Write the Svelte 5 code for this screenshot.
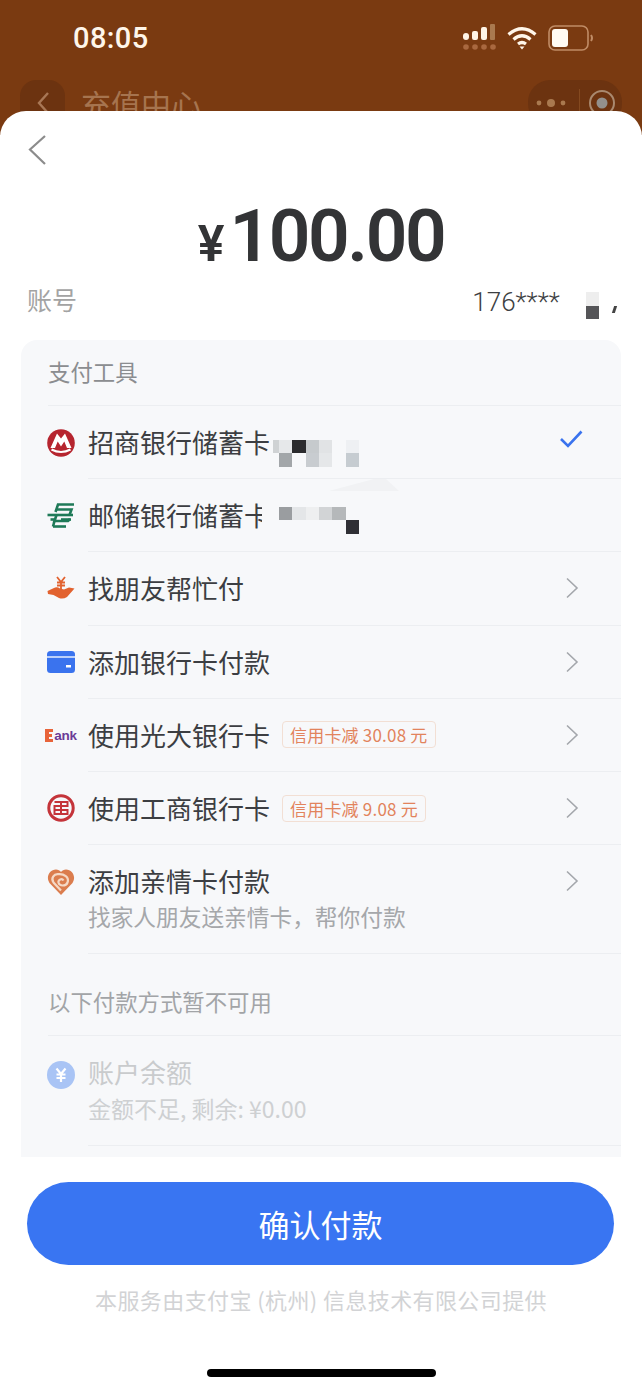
<script>
	const payRows = [
		{ id: 'cmb', name: '招商银行储蓄卡', check: true },
		{ id: 'psbc', name: '邮储银行储蓄卡', smudge: true },
		{ id: 'friend', name: '找朋友帮忙付', arrow: true },
		{ id: 'card', name: '添加银行卡付款', arrow: true },
		{ id: 'ceb', name: '使用光大银行卡', arrow: true, tag: '信用卡减 30.08 元' },
		{ id: 'icbc', name: '使用工商银行卡', arrow: true, tag: '信用卡减 9.08 元' },
		{ id: 'heart', name: '添加亲情卡付款', arrow: true, sub: '找家人朋友送亲情卡，帮你付款' }
	];

	// blurred out card numbers, two lines of cells
	const mosaicA = ['#e6e8ea', '#2b2b2e', '#c6cacd', '#e1e3e5', '', '#eef0f3', '#a2a6a9', '', '#c8ccd0', '#e5e7e9', '', '#c6ccd1'];
	const mosaicB = ['#9a9da0', '#e4e6e8', '#eeeff0', '#d2d4d6', '#b5b8ba', '', '', '', '', '', '', '#2f2f35'];
	const mosaicC = ['#eeeeee', '#555558'];
</script>

{#snippet mosaic(cells, cols)}
	<div class="mosaic" style="grid-template-columns: repeat({cols}, 13.3px)">
		{#each cells as c}
			<span style="background: {c || 'transparent'}"></span>
		{/each}
	</div>
{/snippet}

{#snippet chevron()}
	<svg width="14" height="22" viewBox="0 0 14 22" fill="none">
		<path d="M2 1.5 L12 11 L2 20.5" stroke="#a4a7ac" stroke-width="1.6" />
	</svg>
{/snippet}

{#snippet icon(id)}
	{#if id === 'cmb'}
		<svg width="28" height="28" viewBox="0 0 28 28">
			<circle cx="14" cy="14" r="13.8" fill="#b6252f" />
			<path d="M3.5 19 L10 4.5 L14 9.5 L18 4.5 L24.5 19 L20 19 L17.3 12.5 L14 17.5 L10.7 12.5 L8 19 Z" fill="#fff" />
			<path d="M4.5 20.5 Q14 25.5 23.5 20.5" stroke="#fff" stroke-width="2.2" fill="none" />
		</svg>
	{:else if id === 'psbc'}
		<svg width="28" height="28" viewBox="0 0 28 28" fill="none" stroke="#1f7a58" stroke-width="2.6">
			<path d="M8.5 10 L11 2.5 H27" />
			<path d="M9 7.5 H24.5 L22.5 13" />
			<path d="M0.5 13 H26" />
			<path d="M9.5 13 L7.5 19 H21 L23 17" />
			<path d="M3.5 17.5 H8.5" />
			<path d="M14 17.5 H24" />
			<path d="M6 24.5 L7.5 19" />
			<path d="M6 24.5 H19" />
		</svg>
	{:else if id === 'friend'}
		<svg width="28" height="26" viewBox="0 0 28 26">
			<path d="M0.5 15 L7 12 Q10 10.5 13 12.5 L17 13.5 L22 11.5 L27.5 12.5 L20 21 Q16 23.5 12 22 L6.5 19 L1 18 Z" fill="#e2622f" />
			<path d="M10 1 L14 6 L18 1 M14 6 V13 M10 6.5 H18 M10 9.5 H18" stroke="#e2622f" stroke-width="1.8" fill="none" />
		</svg>
	{:else if id === 'card'}
		<svg width="28" height="22" viewBox="0 0 28 22">
			<rect width="28" height="22" rx="3.5" fill="#3a73ee" />
			<rect y="5" width="28" height="2" fill="#bcd0fa" />
			<rect x="19" y="14" width="5" height="2.5" fill="#fff" />
		</svg>
	{:else if id === 'ceb'}
		<div class="bank">
			<svg width="8" height="13" viewBox="0 0 8 13"><path d="M0 0 H8 V3 H4 V5 H7 V8 H4 V10 H8 V13 H0 Z" fill="#e8643a" /></svg>
			<span>ank</span>
		</div>
	{:else if id === 'icbc'}
		<svg width="28" height="28" viewBox="0 0 28 28" fill="none" stroke="#c4343a">
			<circle cx="14" cy="14" r="12.2" stroke-width="3" />
			<path d="M7.5 8 H20.5 V12 H7.5 V16 M7.5 16 H20.5 V20 H7.5 V16 M14 8 V20" stroke-width="2" />
		</svg>
	{:else if id === 'heart'}
		<svg width="28" height="28" viewBox="0 0 28 28" fill="none">
			<path d="M14 27 L2.5 15 C-1.5 9 2.5 1.5 9 1.5 C11 1.5 13 2.5 14 4 C15 2.5 17 1.5 19 1.5 C25.5 1.5 29.5 9 25.5 15 Z" fill="#db7d4e" />
			<path d="M14 22.5 L6.5 14.5 C3.5 10 7 6 11 6.2 C17 5.5 22.5 9 20.5 14.5 C19 18.5 12.5 18.5 11.5 14.5 C11 11.5 15 10 16.5 12.5" stroke="#f5d9c6" stroke-width="2.2" />
		</svg>
	{/if}
{/snippet}

<div class="page">
	<header class="top">
		<div class="status">
			<span class="time">08:05</span>
			<div class="status-icons">
				<svg width="33" height="28" viewBox="0 0 33 28">
					<rect x="0" y="9" width="6" height="7" rx="3" fill="#fff4e6" />
					<rect x="9" y="7" width="6" height="9" rx="2" fill="#fff4e6" />
					<rect x="18" y="3" width="6" height="13" rx="2" fill="#fff4e6" />
					<rect x="27" y="0" width="5" height="16" rx="1" fill="#a9794f" />
					<g fill="#a9683f">
						<circle cx="3" cy="23" r="2.8" /><circle cx="12" cy="23" r="2.8" /><circle cx="21" cy="23" r="2.8" /><circle cx="30" cy="23" r="2.8" />
					</g>
				</svg>
				<svg width="30" height="24" viewBox="0 0 30 24" fill="none" stroke="#fff6ea" stroke-width="3.2">
					<path d="M1.5 8.5 Q15 -3 28.5 8.5" />
					<path d="M6.5 13.5 Q15 6 23.5 13.5" />
					<path d="M11 18 Q15 15 19 18" />
					<path d="M12.5 20.5 H17.5 L15 23.5 Z" fill="#fff6ea" stroke="none" />
				</svg>
				<svg width="46" height="26" viewBox="0 0 46 26" fill="none">
					<rect x="1" y="1" width="39" height="24" rx="6" stroke="#c08c66" stroke-width="1.6" />
					<rect x="4" y="4" width="16" height="18" rx="3" fill="#fffaf2" />
					<path d="M43 10 Q45 13 43 16" stroke="#c08c66" stroke-width="2" />
				</svg>
			</div>
		</div>
		<nav class="nav">
			<div class="nav-back">
				<svg width="14" height="24" viewBox="0 0 14 24" fill="none"><path d="M12 2 L3 12 L12 22" stroke="#a87755" stroke-width="2.4" /></svg>
			</div>
			<span class="nav-title">充值中心</span>
			<div class="capsule">
				<svg width="40" height="10" viewBox="0 0 40 10" fill="#a9794f">
					<circle cx="8" cy="5" r="2.4" /><circle cx="20" cy="5" r="4" /><circle cx="32" cy="5" r="2.4" />
				</svg>
				<i></i>
				<svg width="28" height="28" viewBox="0 0 28 28" fill="none">
					<circle cx="14" cy="14" r="12" stroke="#a9896f" stroke-width="2" />
					<circle cx="14" cy="14" r="5.5" fill="#93908c" />
				</svg>
			</div>
		</nav>
	</header>

	<main class="sheet">
		<button class="back" aria-label="返回">
			<svg width="20" height="32" viewBox="0 0 20 32" fill="none"><path d="M18 2 L3 15.5 L18 30" stroke="#8c8c8c" stroke-width="2.2" /></svg>
		</button>

		<div class="amount"><span class="yen">¥</span>100.00</div>

		<div class="account">
			<span class="acc-label">账号</span>
			<div class="acc-value">
				<span>176****</span>
				{@render mosaic(mosaicC, 1)}
				<em></em>
			</div>
		</div>

		<section class="tools">
			<h2 class="group-title">支付工具</h2>
			{#each payRows as row}
				<div class="row">
					<div class="ic">{@render icon(row.id)}</div>
					<div class="row-body">
						<div class="row-main">
							<div class="row-text">
								<div class="name-line">
									<span class="name">{row.name}</span>
									{#if row.id === 'cmb'}<div class="blur-a">{@render mosaic(mosaicA, 6)}</div>{/if}
									{#if row.id === 'psbc'}<div class="blur-b">{@render mosaic(mosaicB, 6)}</div>{/if}
									{#if row.smudge}
										<span class="patch"></span>
									{/if}
									{#if row.tag}<span class="tag">{row.tag}</span>{/if}
								</div>
								{#if row.sub}<div class="sub">{row.sub}</div>{/if}
							</div>
							<div class="side" class:is-check={row.check}>
								{#if row.check}
									<svg width="24" height="20" viewBox="0 0 24 20" fill="none"><path d="M2 10 L9 17 L22.5 2.5" stroke="#3a73ee" stroke-width="2.6" /></svg>
								{:else if row.arrow}
									{@render chevron()}
								{/if}
							</div>
						</div>
						{#if row.smudge}
							<svg class="wedge" width="70" height="12" viewBox="0 0 70 12"><path d="M0 12 L45 0 H57 L70 12 Z" fill="#f1f2f4" /></svg>
						{/if}
					</div>
				</div>
			{/each}

			<h2 class="group-title off-title">以下付款方式暂不可用</h2>
			<div class="row off">
				<div class="ic">
					<svg width="28" height="28" viewBox="0 0 28 28">
						<circle cx="14" cy="14" r="14" fill="#a9c4f5" />
						<path d="M9.5 7.5 L14 13 L18.5 7.5 M14 13 V21 M9.5 13.5 H18.5 M9.5 17 H18.5" stroke="#fff" stroke-width="2.2" fill="none" />
					</svg>
				</div>
				<div class="row-body">
					<div class="row-text">
						<div class="name">账户余额</div>
						<div class="sub">金额不足, 剩余: ¥0.00</div>
					</div>
				</div>
			</div>
		</section>

		<button class="confirm">确认付款</button>
		<p class="provider">本服务由支付宝 (杭州) 信息技术有限公司提供</p>
		<div class="home-bar"></div>
	</main>
</div>

<style>
	:global(body) {
		margin: 0;
		background: #fff;
	}

	.page {
		width: 642px;
		height: 1389px;
		overflow: hidden;
		display: flex;
		flex-direction: column;
		font-family: "Noto Sans CJK SC", "Liberation Sans", sans-serif;
		color: #3c3e42;
	}

	.top {
		height: 135px;
		margin-bottom: -24px;
		flex: none;
		background: #7a3a11;
		overflow: hidden;
	}

	.status {
		height: 80px;
		padding: 0 48px 0 73px;
		box-sizing: border-box;
		display: flex;
		justify-content: space-between;
		align-items: center;
	}

	.time {
		font-family: Roboto, sans-serif;
		font-size: 29px;
		font-weight: 500;
		letter-spacing: 0.4px;
		color: #fff6ea;
		margin-top: -4px;
	}

	.status-icons {
		display: flex;
		align-items: center;
		gap: 11px;
		margin-top: -5px;
	}

	.nav {
		height: 46px;
		padding: 0 20px;
		display: flex;
		align-items: center;
	}

	.nav-back {
		width: 45px;
		height: 46px;
		border-radius: 16px;
		background: #6c3310;
		display: flex;
		align-items: center;
		justify-content: center;
	}

	.nav-title {
		margin-left: 16px;
		font-size: 30px;
		color: #a6744f;
		flex: 1;
	}

	.capsule {
		width: 94px;
		height: 46px;
		border-radius: 22px;
		background: #6c3310;
		display: flex;
		align-items: center;
		justify-content: space-between;
		padding: 0 6px 0 3px;
		box-sizing: border-box;
	}

	.capsule i {
		width: 1px;
		height: 28px;
		background: #84491f;
	}

	.sheet {
		position: relative;
		flex: 1;
		background: #fff;
		border-radius: 26px 26px 0 0;
		display: flex;
		flex-direction: column;
	}

	.back {
		align-self: flex-start;
		margin: 23px 0 0 27px;
		padding: 0;
		border: 0;
		background: none;
		height: 32px;
	}

	.amount {
		margin-top: 25px;
		height: 90px;
		display: flex;
		justify-content: center;
		align-items: baseline;
		font-family: Roboto, sans-serif;
		font-size: 73px;
		line-height: 90px;
		font-weight: 600;
		color: #333436;
		letter-spacing: -2.4px;
	}

	.yen {
		font-size: 50px;
		margin-right: 5px;
		letter-spacing: 0;
	}

	.account {
		margin-top: -10px;
		padding: 0 26px 0 27px;
		height: 56px;
		display: flex;
		justify-content: space-between;
		align-items: center;
	}

	.acc-label {
		font-size: 25px;
		color: #a3a3a3;
	}

	.acc-value {
		display: flex;
		align-items: center;
		font-family: Roboto, sans-serif;
		font-size: 26px;
		font-weight: 300;
		color: #3c3e42;
		margin-top: 6px;
	}

	.acc-value .mosaic {
		margin: 7px 14px 0 26px;
	}

	.acc-value em {
		width: 3px;
		height: 7px;
		margin-top: 14px;
		background: #444;
		transform: skewX(-18deg);
	}

	.mosaic {
		display: grid;
		grid-auto-rows: 13.5px;
		flex: none;
	}

	.tools {
		margin: 13px 21px 0;
		height: 817px;
		flex: none;
		background: #f7f8fa;
		border-radius: 16px 16px 0 0;
		overflow: hidden;
	}

	.group-title {
		margin: 0 0 0 27px;
		height: 66px;
		line-height: 62px;
		box-sizing: border-box;
		font-size: 22.4px;
		font-weight: 400;
		color: #8b8d90;
		border-bottom: 1px solid #eceef1;
	}

	.off-title {
		height: 82px;
		line-height: 94px;
		color: #a2a4a7;
	}

	.row {
		display: flex;
		padding-left: 26px;
	}

	.ic {
		width: 28px;
		height: 73px;
		margin-right: 13px;
		flex: none;
		display: flex;
		align-items: center;
		justify-content: center;
	}

	.row-body {
		position: relative;
		flex: 1;
		min-width: 0;
		border-bottom: 1px solid #eceef1;
		box-sizing: border-box;
	}

	.row-main {
		display: flex;
		justify-content: space-between;
	}

	.row-text {
		padding-top: 18px;
		min-width: 0;
	}

	.name-line {
		position: relative;
		display: flex;
		align-items: center;
	}

	.row:not(.off) .row-text {
		padding: 0;
		min-height: 72.2px;
	}

	.row:not(.off) .name-line {
		height: 72.2px;
	}

	.name {
		font-size: 26px;
		line-height: 36px;
		color: #3c3e42;
		white-space: nowrap;
	}

	.blur-a {
		position: relative;
		margin: 22px 0 0 9px;
	}

	.blur-a::before {
		content: "";
		position: absolute;
		left: -6px;
		top: 0;
		width: 6px;
		height: 13px;
		background: #cfd2d4;
	}

	.blur-b {
		margin: 10px 0 0 9px;
	}

	/* white smear over the last glyph in the source photo */
	.patch {
		position: absolute;
		left: 174px;
		top: 16px;
		width: 12px;
		height: 40px;
		background: #f7f8fa;
	}

	.wedge {
		position: absolute;
		left: 241px;
		top: 0;
	}

	.tag {
		margin-left: 12px;
		padding: 0 7px;
		height: 25px;
		line-height: 25px;
		border: 1px solid #f2dfd4;
		border-radius: 4px;
		font-size: 17px;
		letter-spacing: 0.2px;
		color: #e2835c;
		white-space: nowrap;
	}

	.sub {
		font-size: 22.7px;
		line-height: 30px;
		margin: -15px 0 21px;
		color: #a5a7aa;
		white-space: nowrap;
	}

	.side {
		width: 60px;
		height: 72px;
		flex: none;
		display: flex;
		align-items: center;
		justify-content: flex-start;
		padding-left: 4px;
		box-sizing: border-box;
	}

	.side.is-check {
		padding-left: 0;
		margin-top: -3px;
	}

	.side.is-check svg {
		margin-left: -2px;
	}

	.off .ic {
		height: 78px;
	}

	.off .row-body {
		height: 110px;
	}

	.off .name {
		color: #c9cbcd;
	}

	.off .sub {
		margin: 3px 0 0;
		font-size: 23px;
		font-family: "Noto Sans CJK SC", Roboto, sans-serif;
		color: #ced0d2;
	}

	.confirm {
		margin: 25px 28px 0 27px;
		height: 83px;
		flex: none;
		border: 0;
		border-radius: 42px;
		background: #3975f2;
		color: #fff;
		font-family: inherit;
		font-size: 31px;
		padding: 0;
	}

	.provider {
		margin: 18px 0 0;
		text-align: center;
		font-size: 22px;
		letter-spacing: 0.4px;
		line-height: 32px;
		color: #d2d3d5;
	}

	.home-bar {
		width: 229px;
		height: 8px;
		border-radius: 4px;
		background: #000;
		position: absolute;
		left: 207px;
		bottom: 12px;
	}

	.bank {
		display: flex;
		align-items: center;
		gap: 1px;
		font-family: "Liberation Sans", sans-serif;
		font-weight: 700;
		font-size: 13.5px;
		color: #6b3a96;
		letter-spacing: -0.3px;
	}
</style>
